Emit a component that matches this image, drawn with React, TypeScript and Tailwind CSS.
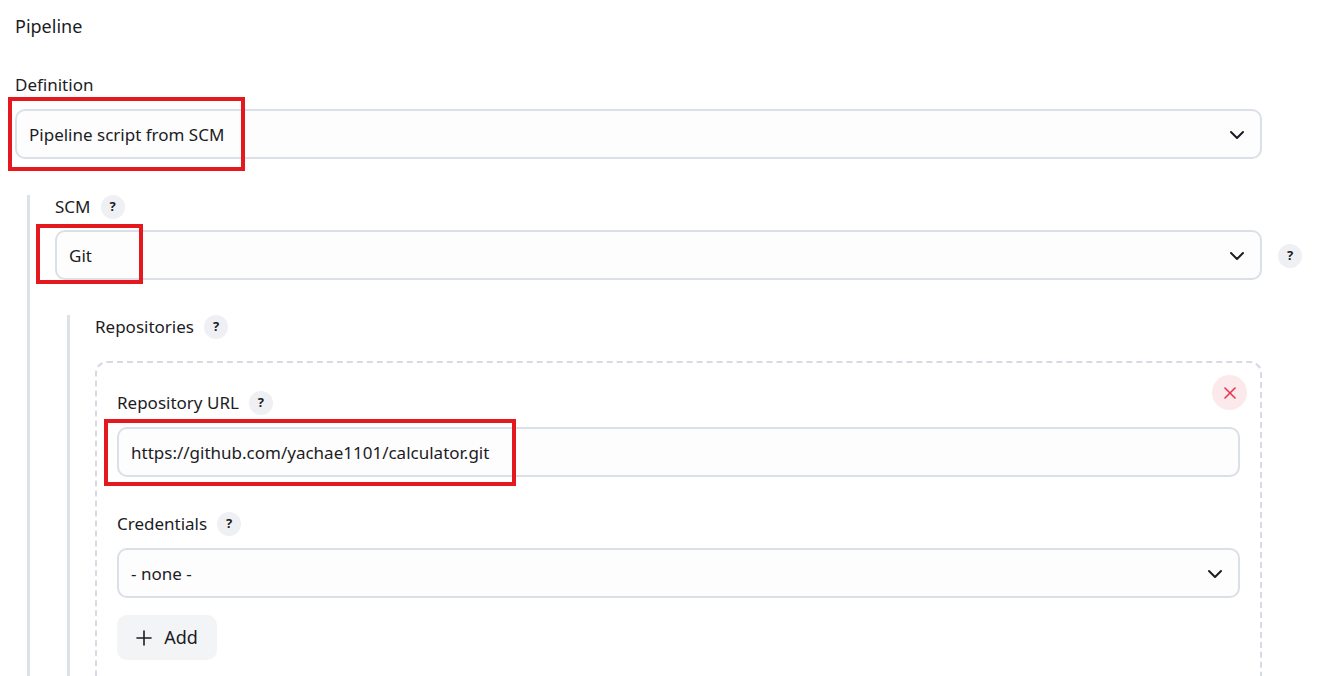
import React from "react";

function Help() {
  return (
    <span className="inline-flex h-[24px] w-[24px] items-center justify-center rounded-full bg-[#eef0f3] text-[13px] font-bold text-[#1c1c24]">
      ?
    </span>
  );
}

function Chevron() {
  return (
    <svg width="18" height="18" viewBox="0 0 18 18" fill="none" stroke="#1c1c24" strokeWidth="2" strokeLinecap="round" strokeLinejoin="round">
      <polyline points="3,6 9,12 15,6" />
    </svg>
  );
}

function Field({ value, select = true }: { value: string; select?: boolean }) {
  return (
    <div className="flex h-[50px] w-full items-center justify-between rounded-[10px] border-2 border-[#dadfe8] bg-[#fdfdfe] pl-[12px] pr-[14px] pt-[2px] text-[17px] text-[#1c1c24]">
      <span>{value}</span>
      {select && <Chevron />}
    </div>
  );
}

function Label({ text, help = true }: { text: string; help?: boolean }) {
  return (
    <div className="flex h-[24px] items-center gap-[10px] text-[17px] text-[#1c1c24]">
      <span>{text}</span>
      {help && <Help />}
    </div>
  );
}

function RedBox({ className }: { className: string }) {
  return <div className={`pointer-events-none absolute border-[4px] border-[#e3191f] ${className}`} />;
}

export default function App() {
  return (
    <div className="h-[676px] w-[1317px] overflow-hidden bg-white pl-[15px] pt-[14px] font-['Noto_Sans',sans-serif]">
      <div className="w-[1247px]">
        <div className="h-[24px] text-[18px] leading-[24px] text-[#1c1c24]">Pipeline</div>

        <div className="mt-[35px]">
          <Label text="Definition" help={false} />
          <div className="relative mt-[12px]">
            <Field value="Pipeline script from SCM" />
            <RedBox className="left-[-7px] top-[-12px] h-[74px] w-[237px]" />
          </div>
        </div>

        <div className="ml-[12px] mt-[36px] border-l-[3px] border-[#dde1ea] pl-[25px] pb-[40px]">
          <Label text="SCM" />
          <div className="mt-[11px] flex items-center">
            <div className="relative w-[1207px] shrink-0">
              <Field value="Git" />
              <RedBox className="left-[-19px] top-[-6px] h-[60px] w-[107px]" />
            </div>
            <div className="ml-[16px]">
              <Help />
            </div>
          </div>

          <div className="ml-[12px] mt-[35px] border-l-[3px] border-[#dde1ea] pl-[25px] pb-[40px]">
            <Label text="Repositories" />
            <div className="relative mt-[22px] w-[1167px] rounded-[12px] border-2 border-dashed border-[#d5dae4] px-[20px] pt-[28px] pb-[40px]">
              <button className="absolute right-[13px] top-[12px] flex h-[35px] w-[35px] items-center justify-center rounded-full bg-[#fce9eb]">
                <svg width="14" height="14" viewBox="0 0 14 14" stroke="#e8344c" strokeWidth="1.6" strokeLinecap="round">
                  <line x1="2" y1="2" x2="12" y2="12" />
                  <line x1="12" y1="2" x2="2" y2="12" />
                </svg>
              </button>
              <Label text="Repository URL" />
              <div className="relative mt-[12px]">
                <Field value="https://github.com/yachae1101/calculator.git" select={false} />
                <RedBox className="left-[-13px] top-[-8px] h-[67px] w-[412px]" />
              </div>

              <div className="mt-[35px]">
                <Label text="Credentials" />
                <div className="mt-[12px]">
                  <Field value="- none -" />
                </div>
              </div>

              <button className="mt-[17px] flex h-[45px] w-[100px] items-center justify-center gap-[12px] rounded-[10px] bg-[#f3f4f6] text-[18px] text-[#1c1c24]">
                <svg width="16" height="16" viewBox="0 0 16 16" stroke="#1c1c24" strokeWidth="1.6" strokeLinecap="round">
                  <line x1="8" y1="1" x2="8" y2="15" />
                  <line x1="1" y1="8" x2="15" y2="8" />
                </svg>
                <span>Add</span>
              </button>
            </div>
          </div>
        </div>
      </div>
    </div>
  );
}
